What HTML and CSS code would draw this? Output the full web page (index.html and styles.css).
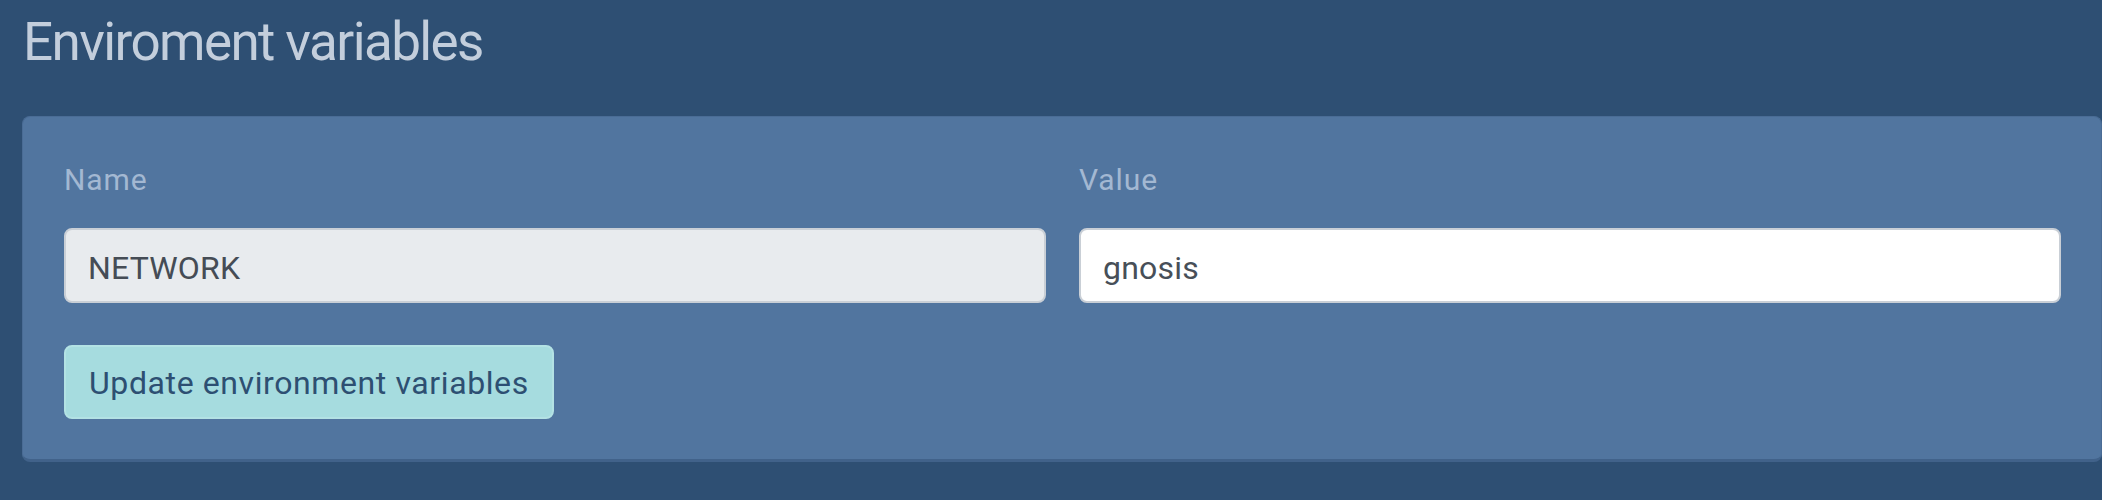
FILE: index.html
```html
<!DOCTYPE html>
<html lang="en">
<head>
<meta charset="utf-8">
<title>Enviroment variables</title>
<link rel="stylesheet" href="styles.css">
</head>
<body>
<div class="page">
  <h1 class="title">Enviroment variables</h1>
  <div class="card">
    <div class="fields">
      <div class="field">
        <label class="label" for="env-name">Name</label>
        <input class="input input-disabled" id="env-name" type="text" value="NETWORK" disabled>
      </div>
      <div class="field">
        <label class="label" for="env-value">Value</label>
        <input class="input" id="env-value" type="text" value="gnosis">
      </div>
    </div>
    <button class="button" type="button">Update environment variables</button>
  </div>
</div>
</body>
</html>
```

FILE: styles.css
```css
html, body {
  margin: 0;
  padding: 0;
}
body {
  background: #2e4f73;
  font-family: Roboto, "Noto Sans", sans-serif;
  width: 2102px;
  height: 500px;
  overflow: hidden;
}
.page {
  padding: 0 0 0 22px;
}
.title {
  margin: 0;
  padding: 10px 0 0 1px;
  font-size: 53px;
  line-height: 64px;
  font-weight: 400;
  color: #c3cedc;
  letter-spacing: -1.6px;
}
.card {
  margin-top: 42px;
  background: #51759f;
  border: 1px solid #4a6c95;
  border-bottom: 3px solid #41628a;
  border-radius: 8px;
  padding: 40px 40px 40px 41px;
}
.fields {
  display: grid;
  grid-template-columns: 1fr 1fr;
  column-gap: 33px;
}
.field {
  display: flex;
  flex-direction: column;
}
.label {
  font-size: 30px;
  line-height: 45px;
  color: #a3b8d2;
  letter-spacing: 0.9px;
  margin-bottom: 26px;
}
.input {
  box-sizing: border-box;
  height: 75px;
  padding: 4px 22px 0;
  font-family: inherit;
  font-size: 32px;
  letter-spacing: 0.2px;
  color: #474f58;
  background: #ffffff;
  border: 2px solid #c9cfd6;
  border-radius: 8px;
  outline: none;
  width: 100%;
}
.input-disabled {
  background: #e8ebee;
  color: #454c55;
  -webkit-text-fill-color: #454c55;
  opacity: 1;
}
.button {
  margin-top: 42px;
  height: 74px;
  padding: 2px 23px 0;
  font-family: inherit;
  font-size: 32px;
  letter-spacing: 0.6px;
  color: #2d4f72;
  background: #a6dcdf;
  border: 2px solid #b3e2e4;
  border-radius: 8px;
  cursor: pointer;
}
```
